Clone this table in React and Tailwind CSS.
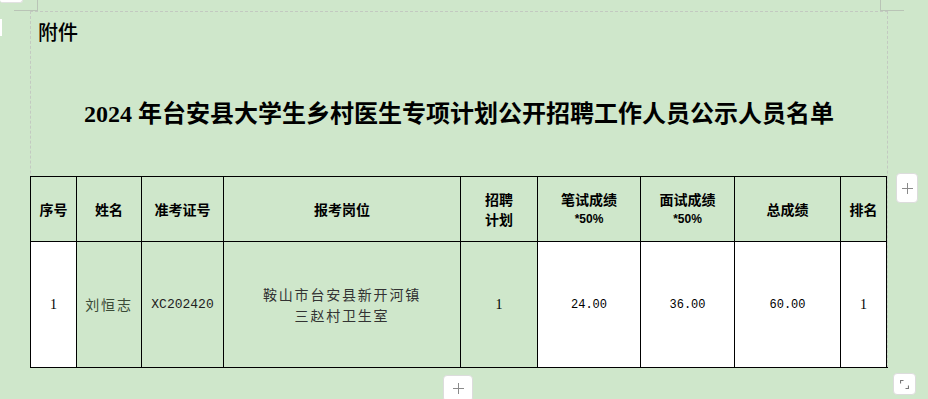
import React from "react";

const cjk = "font-['Noto_Sans_CJK_SC',sans-serif]";

const headers = [
    ["序号"],
    ["姓名"],
    ["准考证号"],
    ["报考岗位"],
    ["招聘", "计划"],
    ["笔试成绩", "*50%"],
    ["面试成绩", "*50%"],
    ["总成绩"],
    ["排名"],
];

function Cell({ children, white, last }) {
    return (
        <div
            className={`flex items-center justify-center text-center border-l border-t border-black ${white ? "bg-white" : "bg-[#cfe7cb]"} ${last ? "border-r" : ""}`}
        >
            {children}
        </div>
    );
}

function PlusButton({ className }) {
    return (
        <div className={`absolute bg-white border border-[#dcdcdc] rounded-[4px] grid place-items-center ${className}`}>
            <svg width="11" height="11" viewBox="0 0 11 11">
                <path d="M5.5 0v11M0 5.5h11" stroke="#8a8a8a" strokeWidth="1" />
            </svg>
        </div>
    );
}

export default function App() {
    return (
        <div className="relative w-[928px] h-[399px] overflow-hidden bg-[#cfe7cb]">
            {/* editor chrome over the page */}
            <div className="absolute left-0 top-0 w-[23px] h-[3px] bg-white rounded-b-[3px] border-b border-r border-[#e2e2e2]" />
            <div className="absolute left-0 top-[19px] w-[2px] h-[17px] bg-white" />
            <div className="absolute left-[14px] top-0 w-[24px] h-[11px] border-r border-b border-[#b9c4b6]" />
            <div className="absolute left-[880px] top-0 w-[24px] h-[11px] border-l border-b border-[#b9c4b6]" />

            <div className="ml-[30px] mt-[11px] w-[858px] border-t border-l border-r border-dashed border-[#c3c9c1]">
                <div className={`pt-[9px] pl-[7px] text-[20px] leading-[22px] text-black font-medium ${cjk}`}>附件</div>
                <h1 className="mt-[55px] h-[32px] text-center text-[24px] leading-[32px] font-bold text-black font-['Liberation_Serif','Noto_Sans_CJK_SC',serif]">
                    2024 年台安县大学生乡村医生专项计划公开招聘工作人员公示人员名单
                </h1>

                <div className="mt-[46px] -mx-px grid grid-cols-[46px_65px_82px_237px_77px_103px_94px_106px_47px] grid-rows-[65px_126px] border-b border-black">
                    {headers.map((lines, i) => (
                        <Cell key={i} last={i === headers.length - 1}>
                            <div className={`text-[14px] leading-[20px] font-bold text-black ${cjk}`}>
                                {lines.map((l, j) => (
                                    <div key={j} className={l.startsWith("*") ? "text-[12px] font-['Liberation_Sans',sans-serif]" : ""}>{l}</div>
                                ))}
                            </div>
                        </Cell>
                    ))}

                    <Cell white>
                        <span className="text-[14px] text-black font-['Liberation_Serif',serif]">1</span>
                    </Cell>
                    <Cell>
                        <span className={`text-[14px] tracking-[1.8px] text-[#3a4a36] ${cjk}`}>刘恒志</span>
                    </Cell>
                    <Cell>
                        <span className="text-[13px] text-[#222] font-['Liberation_Mono',monospace]">XC202420</span>
                    </Cell>
                    <Cell>
                        <div className={`text-[14px] leading-[21px] tracking-[1.8px] text-[#333] ${cjk}`}>
                            <div>鞍山市台安县新开河镇</div>
                            <div>三赵村卫生室</div>
                        </div>
                    </Cell>
                    <Cell>
                        <span className="text-[14px] text-black font-['Liberation_Serif',serif]">1</span>
                    </Cell>
                    <Cell white>
                        <span className="text-[12px] text-black font-['Liberation_Mono',monospace]">24.00</span>
                    </Cell>
                    <Cell white>
                        <span className="text-[12px] text-black font-['Liberation_Mono',monospace]">36.00</span>
                    </Cell>
                    <Cell white>
                        <span className="text-[12px] text-black font-['Liberation_Mono',monospace]">60.00</span>
                    </Cell>
                    <Cell white last>
                        <span className="text-[14px] text-black font-['Liberation_Serif',serif]">1</span>
                    </Cell>
                </div>
            </div>

            <PlusButton className="left-[896px] top-[173px] w-[22px] h-[30px]" />
            <PlusButton className="left-[443px] top-[375px] w-[30px] h-[27px]" />
            <div className="absolute left-[893px] top-[373px] w-[23px] h-[22px] bg-white border border-[#dcdcdc] rounded-[4px] grid place-items-center">
                <svg width="9" height="9" viewBox="0 0 9 9">
                    <path d="M0.5 3.5V0.5H3.5M8.5 5.5V8.5H5.5" fill="none" stroke="#777" strokeWidth="1.2" />
                </svg>
            </div>
        </div>
    );
}
